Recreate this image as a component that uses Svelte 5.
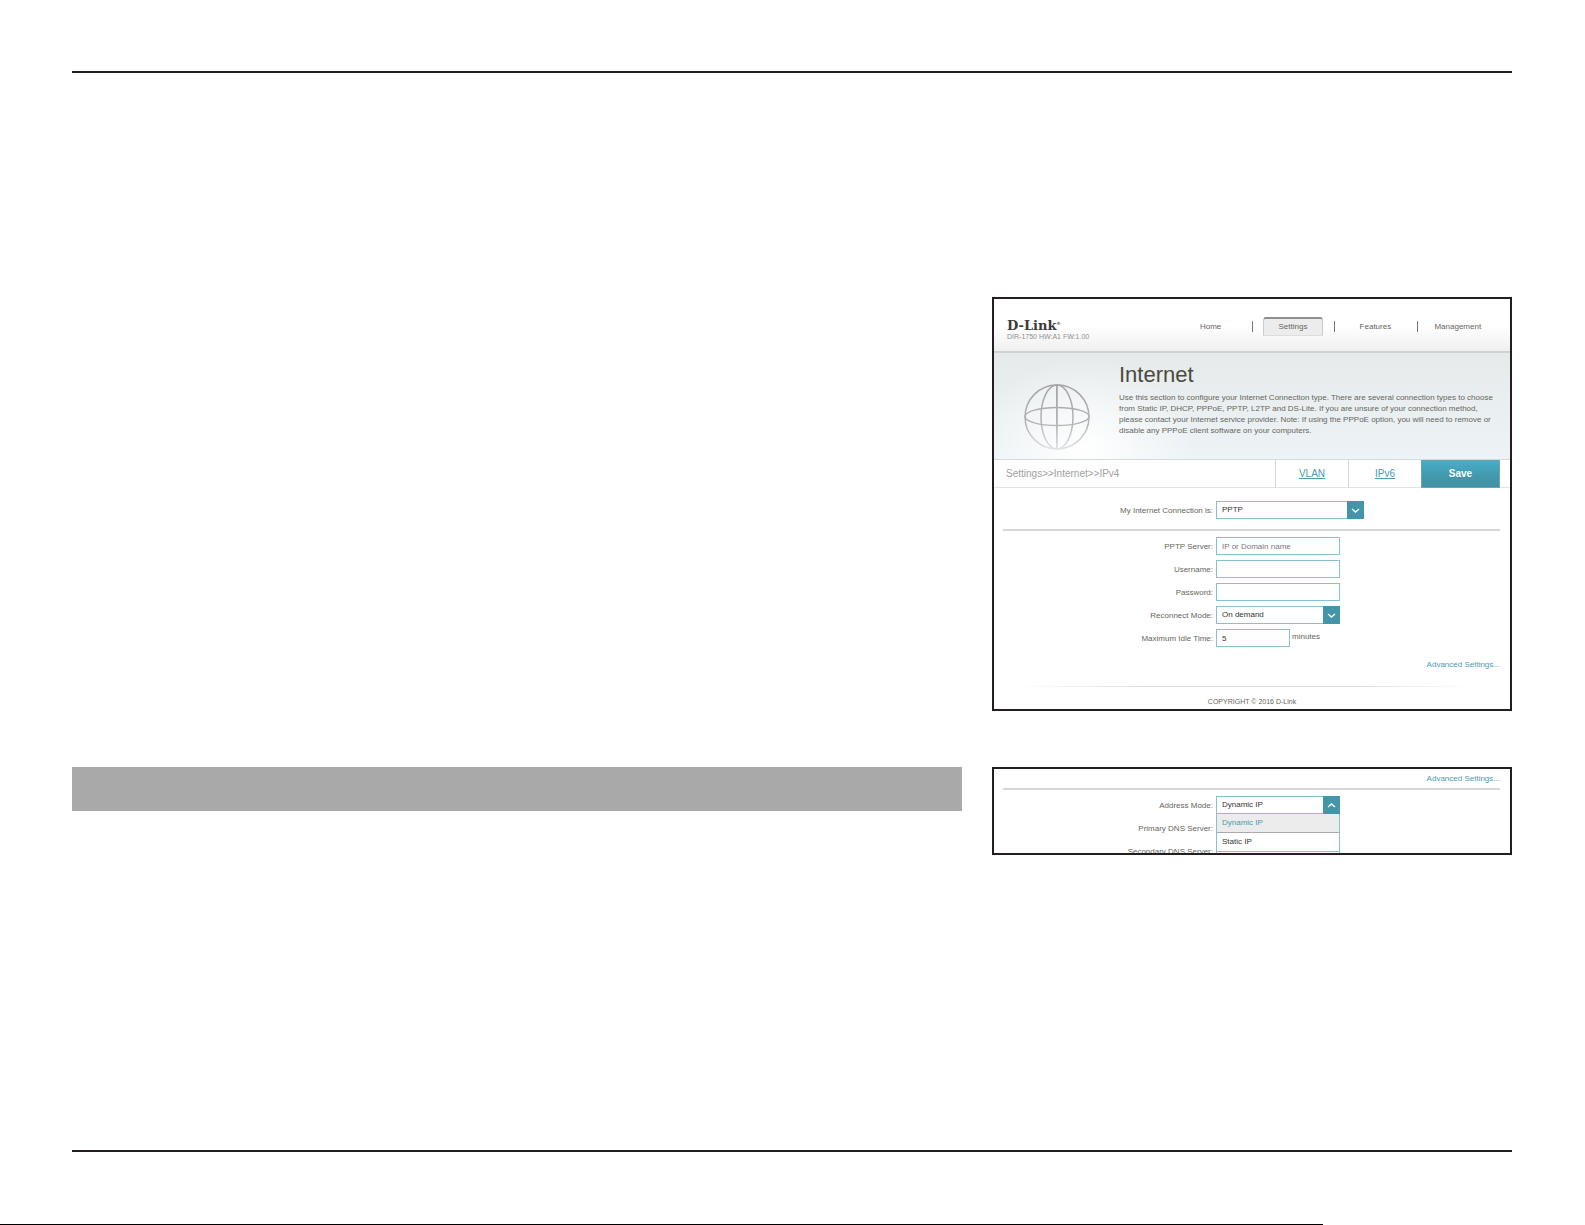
<script>
  // Navigation
  const navItems = ['Home', 'Settings', 'Features', 'Management'];
  const active = 'Settings';

  // Address mode drop-down
  const addressModes = ['Dynamic IP', 'Static IP'];

  let connection = 'PPTP';
  let server = '';
  let username = '';
  let password = '';
  let reconnect = 'On demand';
  let idleTime = '5';
  let addressMode = 'Dynamic IP';
  let primaryDns = '';
  let secondaryDns = '';
  let listOpen = true;

  function pickMode(mode) {
    addressMode = mode;
    listOpen = false;
  }
</script>

<div class="page">
  <main class="columns">
    <section class="frame">
      <header class="top">
        <div class="brand">
          <div class="logo">D-Link<sup>®</sup></div>
          <div class="version">DIR-1750 HW:A1 FW:1.00</div>
        </div>
        <nav>
          {#each navItems as item}
            <div class="nav-cell">
              <a href="#{item.toLowerCase()}" class:active={item === active}>{item}</a>
            </div>
          {/each}
        </nav>
      </header>

      <div class="hero">
        <svg class="globe" viewBox="0 0 66 66" aria-hidden="true">
          <defs>
            <linearGradient id="fade" gradientUnits="userSpaceOnUse" x1="0" y1="0" x2="0" y2="66">
              <stop offset="0" stop-color="#a3a3a3" />
              <stop offset="0.6" stop-color="#b4b4b4" />
              <stop offset="1" stop-color="#e2e4e5" />
            </linearGradient>
          </defs>
          <g fill="none" stroke="url(#fade)" stroke-width="1.5">
            <circle cx="33" cy="33" r="32" />
            <ellipse cx="33" cy="33" rx="16" ry="32" />
            <ellipse cx="33" cy="32.5" rx="32" ry="9" />
          </g>
          <rect x="32" y="1" width="1.8" height="64" fill="url(#fade)" />
        </svg>
        <div class="intro">
          <h1>Internet</h1>
          <p>
            Use this section to configure your Internet Connection type. There are several connection types to choose<br />
            from Static IP, DHCP, PPPoE, PPTP, L2TP and DS-Lite. If you are unsure of your connection method,<br />
            please contact your Internet service provider. Note: If using the PPPoE option, you will need to remove or<br />
            disable any PPPoE client software on your computers.
          </p>
        </div>
      </div>

      <div class="crumbs">
        <span class="path">Settings&gt;&gt;Internet&gt;&gt;IPv4</span>
        <a class="tab" href="#vlan">VLAN</a>
        <a class="tab" href="#ipv6">IPv6</a>
        <button class="save">Save</button>
      </div>

      <form class="body">
        <div class="row first">
          <label for="connection">My Internet Connection is:</label>
          <div class="select wide">
            <select id="connection" bind:value={connection}>
              <option>PPTP</option>
            </select>
            <svg class="arrow" viewBox="0 0 17 18" aria-hidden="true"><path d="M5 8l3.5 3L12 8" /></svg>
          </div>
        </div>
        <hr />
        <div class="fields">
          <div class="row">
            <label for="server">PPTP Server:</label>
            <input id="server" type="text" placeholder="IP or Domain name" bind:value={server} />
          </div>
          <div class="row">
            <label for="username">Username:</label>
            <input id="username" type="text" bind:value={username} />
          </div>
          <div class="row">
            <label for="password">Password:</label>
            <input id="password" type="password" bind:value={password} />
          </div>
          <div class="row">
            <label for="reconnect">Reconnect Mode:</label>
            <div class="select">
              <select id="reconnect" bind:value={reconnect}>
                <option>On demand</option>
              </select>
              <svg class="arrow" viewBox="0 0 17 18" aria-hidden="true"><path d="M5 8l3.5 3L12 8" /></svg>
            </div>
          </div>
          <div class="row">
            <label for="idle">Maximum Idle Time:</label>
            <div class="with-unit">
              <input id="idle" class="short" type="text" bind:value={idleTime} />
              <span>minutes</span>
            </div>
          </div>
        </div>
        <a class="advanced" href="#advanced">Advanced Settings...</a>
      </form>

      <footer>COPYRIGHT © 2016 D-Link</footer>
    </section>

    <div class="band"></div>

    <section class="frame clipped">
      <form class="body">
        <a class="advanced" href="#advanced">Advanced Settings...</a>
        <hr />
        <div class="fields">
          <div class="row">
            <label for="address">Address Mode:</label>
            <div class="select">
              <button id="address" type="button" class="combo" aria-expanded={listOpen} on:click={() => (listOpen = !listOpen)}>
                {addressMode}
              </button>
              <svg class="arrow" viewBox="0 0 17 18" aria-hidden="true"><path d="M5 11l3.5-3L12 11" /></svg>
              {#if listOpen}
                <div class="list">
                  {#each addressModes as mode}
                    <button type="button" class:chosen={mode === addressMode} on:click={() => pickMode(mode)}>{mode}</button>
                  {/each}
                </div>
              {/if}
            </div>
          </div>
          <div class="row">
            <label for="dns1">Primary DNS Server:</label>
            <input id="dns1" type="text" bind:value={primaryDns} />
          </div>
          <div class="row">
            <label for="dns2">Secondary DNS Server:</label>
            <input id="dns2" type="text" bind:value={secondaryDns} />
          </div>
        </div>
      </form>
    </section>
  </main>
  <div class="edge"></div>
</div>

<style>
  :global(body) {
    margin: 0;
    background: #fff;
  }

  .page {
    display: flex;
    flex-direction: column;
    box-sizing: border-box;
    min-height: 100vh;
    padding-top: 71px;
    font-family: "Liberation Sans", Arial, sans-serif;
    font-size: 8px;
    line-height: 11px;
    color: #66665c;
  }

  .columns {
    flex: 1;
    display: grid;
    grid-template-columns: minmax(0, 89fr) minmax(0, 52fr);
    grid-template-rows: auto auto;
    align-content: start;
    gap: 56px 30px;
    margin: 0 73px 72px 72px;
    padding-top: 224px;
    border-top: 2px solid #231f20;
    border-bottom: 2px solid #231f20;
  }

  .frame {
    grid-column: 2;
    border: 2px solid #231f20;
    background: #fff;
  }

  .band {
    grid-column: 1;
    height: 44px;
    background: #a9a9a9;
  }

  .edge {
    width: 83.5%;
    height: 1px;
    background: #000;
  }

  a {
    color: #4a9bb0;
    text-decoration: none;
  }

  /* Header */
  .top {
    display: flex;
    justify-content: space-between;
    align-items: center;
    height: 52px;
    padding: 0 11px 0 13px;
    border-bottom: 2px solid #cfd2d1;
    background: linear-gradient(#fff 50%, #f0f0f0);
  }

  .brand {
    padding-top: 12px;
  }

  .logo {
    font: bold 13px/12px "DejaVu Serif", serif;
    color: #3a3a3a;
  }

  .logo sup {
    font-size: 4px;
    line-height: 1px;
  }

  .version {
    font-size: 7px;
    line-height: 10px;
    color: #8f8f8f;
  }

  nav {
    display: flex;
    width: 67%;
    padding-top: 2px;
  }

  .nav-cell {
    flex: 1;
    display: flex;
    align-items: center;
    justify-content: center;
  }

  .nav-cell + .nav-cell {
    background: linear-gradient(#777, #777) left center / 1px 11px no-repeat;
  }

  nav a {
    width: 58px;
    border: 1px solid transparent;
    border-top-width: 2px;
    line-height: 16px;
    text-align: center;
    color: #66665c;
  }

  nav a.active {
    border-color: #8f8f8f #ccc #ddd;
    border-radius: 3px 3px 1px 1px;
    background: #ececec;
  }

  /* Section banner */
  .hero {
    display: flex;
    height: 106px;
    border-bottom: 1px solid #d5dadb;
    background:
      radial-gradient(ellipse 110px 90px at 90px 90%, #fff, rgba(255, 255, 255, 0)),
      linear-gradient(#e6eaeb, #edf3f6);
  }

  .globe {
    flex: none;
    width: 66px;
    height: 66px;
    margin: 31px 29px 0 30px;
  }

  .intro {
    white-space: nowrap;
  }

  h1 {
    margin: 10px 0 0;
    font-size: 22px;
    font-weight: normal;
    line-height: 24px;
    color: #4b4a3c;
  }

  p {
    margin: 5px 0 0;
  }

  .crumbs {
    display: flex;
    height: 27px;
    padding-right: 10px;
    border-bottom: 1px solid #e0e3e4;
    font-size: 10px;
    line-height: 27px;
  }

  .path {
    flex: 1;
    padding-left: 12px;
    color: #a0a0a0;
  }

  .tab {
    width: 72px;
    border-left: 1px solid #d5d5d5;
    text-align: center;
    text-decoration: underline;
  }

  .save {
    width: 79px;
    height: 28px;
    padding: 0;
    border: 1px solid #67a5b2;
    background: linear-gradient(#48adc8, #4298ab 60%, #4192a5);
    font: bold 10px/24px "Liberation Sans", Arial, sans-serif;
    color: #fff;
  }

  /* Form */
  .body {
    display: flex;
    flex-direction: column;
    padding: 13px 10px 0 9px;
  }

  .row {
    display: grid;
    grid-template-columns: 210px 1fr;
    gap: 3px;
    align-items: center;
  }

  label {
    text-align: right;
  }

  hr {
    width: 100%;
    height: 2px;
    margin: 10px 0 6px;
    border: 0;
    background: #d6d6d6;
  }

  .fields {
    display: grid;
    gap: 5px;
  }

  input,
  select,
  .combo {
    display: block;
    box-sizing: border-box;
    width: 124px;
    height: 18px;
    padding: 0 5px;
    border: 1px solid #8abfcd;
    border-radius: 0;
    background: #fff;
    font: 8px/16px "Liberation Sans", Arial, sans-serif;
    text-align: left;
    color: #333;
    appearance: none;
  }

  input::placeholder {
    color: #777;
  }

  .short {
    width: 74px;
  }

  .with-unit {
    display: flex;
    gap: 2px;
  }

  .with-unit span {
    line-height: 16px;
  }

  .select {
    position: relative;
    width: 124px;
  }

  .wide,
  .wide select {
    width: 148px;
  }

  .arrow {
    position: absolute;
    top: 0;
    right: 0;
    width: 17px;
    height: 18px;
    background: #4396a9;
    fill: none;
    stroke: #fff;
    stroke-width: 1.4;
    pointer-events: none;
  }

  .advanced {
    align-self: flex-end;
    margin-top: 12px;
  }

  footer {
    margin-top: 16px;
    padding: 10px 0 2px;
    background: linear-gradient(90deg, transparent 4%, #ddd 30%, #ddd 70%, transparent 93%) top / 100% 1px no-repeat;
    font-size: 7px;
    text-align: center;
  }

  /* Advanced panel, cut off by its frame */
  .clipped {
    height: 84px;
    overflow: hidden;
  }

  .clipped .body {
    padding-top: 4px;
  }

  .clipped .advanced {
    margin-top: 0;
  }

  .clipped hr {
    margin: 4px 0 6px;
  }

  .list {
    position: absolute;
    top: 18px;
    left: 0;
    z-index: 1;
    box-sizing: border-box;
    width: 100%;
    border: 1px solid #8abfcd;
    border-top: 0;
    background: #fff;
  }

  .list button {
    display: block;
    width: 100%;
    padding: 0 5px;
    border: 0;
    background: #fff;
    font: 8px/18px "Liberation Sans", Arial, sans-serif;
    text-align: left;
    color: #333;
  }

  .list .chosen {
    border-bottom: 1px solid #aaa;
    background: #ececec;
    color: #4a9bb0;
  }
</style>
